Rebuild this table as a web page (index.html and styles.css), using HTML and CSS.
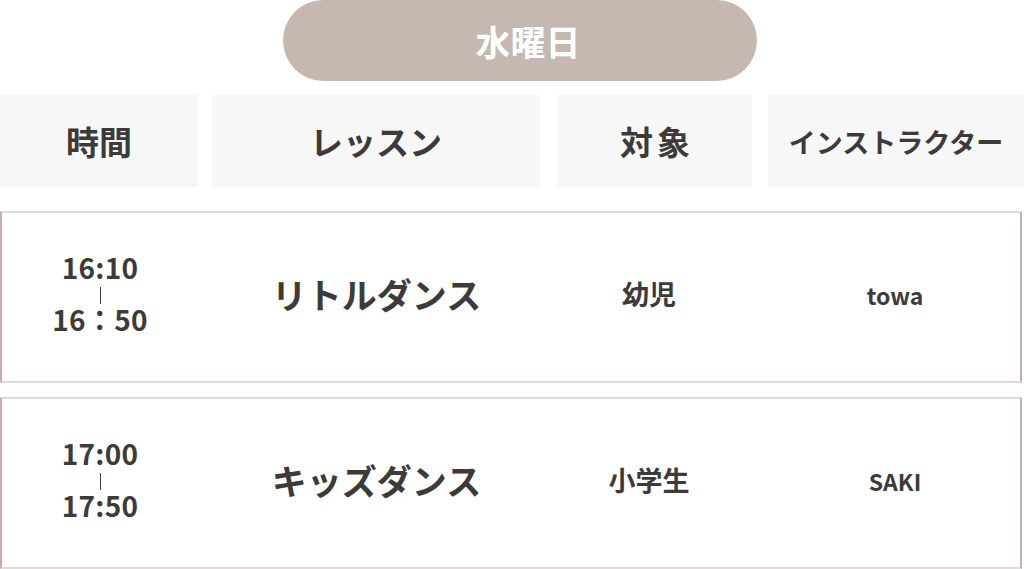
FILE: index.html
```html
<!DOCTYPE html>
<html lang="ja">
<head>
<meta charset="utf-8">
<link rel="stylesheet" href="styles.css">
</head>
<body>
<div class="schedule">
  <div class="day-wrap"><div class="day">水曜日</div></div>
  <div class="head">
    <div class="hcell">時間</div>
    <div class="hcell">レッスン</div>
    <div class="hcell spaced">対象</div>
    <div class="hcell small">インストラクター</div>
  </div>
  <div class="row">
    <div class="cell time"><span>16:10</span><span class="bar"></span><span>16：50</span></div>
    <div class="cell lesson">リトルダンス</div>
    <div class="cell target">幼児</div>
    <div class="cell inst">towa</div>
  </div>
  <div class="row">
    <div class="cell time"><span>17:00</span><span class="bar"></span><span>17:50</span></div>
    <div class="cell lesson">キッズダンス</div>
    <div class="cell target">小学生</div>
    <div class="cell inst">SAKI</div>
  </div>
</div>
</body>
</html>
```
FILE: styles.css
```css
* { box-sizing: border-box; }
html, body { margin: 0; padding: 0; background: #fff; }
body {
  font-family: "Noto Sans CJK JP", "Noto Sans", sans-serif;
  color: #3e3a39;
  font-weight: 700;
  width: 1024px;
  height: 569px;
  overflow: hidden;
}
.schedule { display: flex; flex-direction: column; }
.day-wrap { display: flex; justify-content: center; padding-left: 16px; }
.day {
  width: 474px;
  height: 81px;
  background: #c4b8b0;
  border-radius: 41px;
  color: #fff;
  font-size: 35px;
  display: flex;
  align-items: center;
  justify-content: center;
  line-height: 1;
  padding-left: 16px;
}
.head {
  display: grid;
  grid-template-columns: 198px 342px 212px 272px;
  margin-top: 14px;
  height: 92px;
}
.hcell {
  background: #f7f7f7;
  display: flex;
  align-items: center;
  justify-content: center;
  font-size: 33px;
  line-height: 1;
}
.hcell:nth-child(2) { margin-left: 14px; }
.hcell:nth-child(3) { margin-left: 18px; }
.hcell:nth-child(4) { margin-left: 16px; }
.hcell.spaced { letter-spacing: 4px; padding-left: 4px; }
.hcell.small { font-size: 27px; }
.row {
  display: grid;
  grid-template-columns: 196px 360px 182px 284px;
  width: 1022px;
  height: 172px;
  border-top: 2px solid #e3d9d8;
  border-bottom: 2px solid #e3d9d8;
  border-left: 2px solid #c2aeac;
  border-right: 2px solid #c2aeac;
  margin-top: 24px;
}
.row + .row { margin-top: 14px; }
.cell {
  display: flex;
  align-items: center;
  justify-content: center;
  line-height: 1;
  padding-bottom: 8px;
}
.time {
  flex-direction: column;
  font-size: 28px;
  letter-spacing: 0.3px;
}
.time .bar {
  display: block;
  width: 1px;
  height: 17px;
  background: #3e3a39;
  margin: 6px 0 1px;
}
.lesson { font-size: 35px; padding-right: 3px; }
.target { font-size: 27px; }
.inst { font-size: 23px; padding-left: 26px; padding-bottom: 4px; }
```
